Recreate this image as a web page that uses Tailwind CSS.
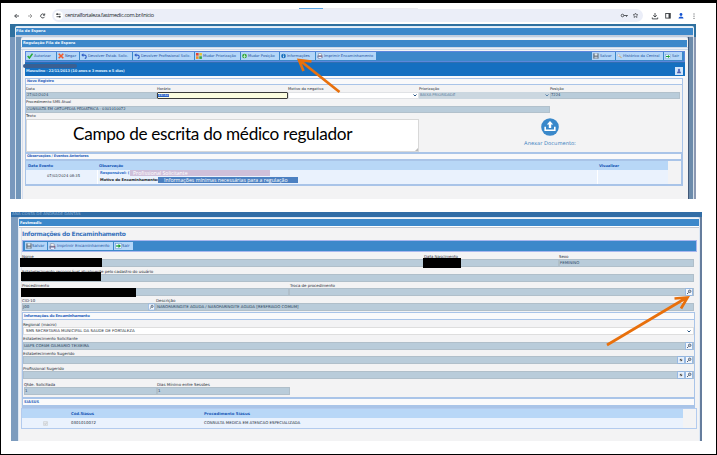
<!DOCTYPE html>
<html lang="pt-BR">
<head>
<meta charset="utf-8">
<title>Central Fortaleza</title>
<script src="https://cdn.jsdelivr.net/npm/@tailwindcss/browser@4"></script>
</head>
<body class="bg-black overflow-hidden">
<svg class="hidden">
  <symbol id="mag" viewBox="0 0 8 8"><rect x=".4" y=".4" width="7.2" height="7.2" rx="1" fill="#f4f7fc" stroke="#7aa7e0" stroke-width=".8"/><circle cx="4.700" cy="3.300" r="1.300" fill="#b9c6d8" stroke="#3c4c60" stroke-width=".7"/><path d="M3.600 4.500L2 6" stroke="#3c4c60" stroke-width=".9"/></symbol>
  <symbol id="clr" viewBox="0 0 8 8"><rect x=".4" y=".4" width="7.2" height="7.2" rx="1" fill="#e6effa" stroke="#7aa7e0" stroke-width=".8"/><circle cx="4" cy="4" r="1.300" fill="#555"/><path d="M3 5l2-2" stroke="#ddd" stroke-width=".5"/></symbol>
  <symbol id="disk" viewBox="0 0 8 8"><path d="M.5.5h6.8v7H.5z" fill="#55606d"/><path d="M2 .5h4v3H2z" fill="#dfe8f2"/><path d="M1.8 4.7h4.4v2.8H1.8z" fill="#b7c3d0"/></symbol>
  <symbol id="print" viewBox="0 0 8 8"><path d="M2 .5l4 .6v3H2z" fill="#fff" stroke="#667" stroke-width=".5"/><path d="M.5 3.2l6.8-.2v3.6l-5 .9L.5 6z" fill="#777b9d"/><path d="M2 5.2h4v1.7H2z" fill="#eef"/><circle cx="6.4" cy="4" r=".5" fill="#d33"/></symbol>
  <symbol id="undo" viewBox="0 0 8 8"><path d="M2 2.8h2.7c3 0 3 4 .3 4.6" fill="none" stroke="#315fc4" stroke-width="1.500"/><path d="M.3 2.8L3.2.3v5z" fill="#315fc4"/></symbol>
  <symbol id="exit" viewBox="0 0 8 7"><rect x=".4" y=".4" width="7.2" height="6.2" fill="#eef8ff" stroke="#6c9bd8" stroke-width=".7"/><path d="M1.2 3.5h4" stroke="#189a32" stroke-width="1.5"/><path d="M4 1.3l3 2.2-3 2.2z" fill="#189a32"/></symbol>
</svg>
<main class="relative mt-[3px] ml-[1px] flex h-[451px] w-[715px] flex-col overflow-hidden bg-white font-['DejaVu_Sans','Verdana',sans-serif] text-[3.7px] leading-none whitespace-nowrap text-[#1d2a35]">

  <!-- Browser chrome -->
  <header class="flex h-[21px] w-full flex-col pl-[9px]">
    <div class="flex h-[6px] items-end pl-[289px]"><i class="h-[1px] w-[24px] bg-[#5ba6e6]"></i><i class="h-[1px] w-[95px] bg-[#ececf1]"></i></div>
    <div class="flex h-[13px] items-center">
      <svg class="h-[10px] w-[42px]" viewBox="0 0 42 10" fill="none" stroke="#3c4043" stroke-width=".9"><path d="M9 5H4.700M6.700 3L4.700 5l2 2"/><path stroke="#999" d="M18 5h4M20 3l2 2-2 2"/><path d="M34.300 3.800a2 2 0 1 0 .2 2M34.700 2.500v1.700h-1.700"/></svg>
      <div class="flex h-[13px] w-[591px] items-center rounded-full bg-[#ebeef8] pl-[2px]">
        <svg class="h-[9px] w-[9px]" viewBox="0 0 9 9"><circle cx="4.500" cy="4.500" r="4.500" fill="#fff"/><path d="M2.500 3.200h4M2.500 5.700h4" stroke="#3c4043" stroke-width=".8"/><circle cx="3.200" cy="3.200" r=".9" fill="#3c4043"/><circle cx="5.700" cy="5.700" r=".9" fill="#3c4043"/></svg>
        <span class="ml-[2px] w-[513px] font-['Open_Sans',sans-serif] text-[5.500px] tracking-[-0.33px] text-[#20262c]">centralfortaleza.fastmedic.com.br/inicio</span>
        <svg class="h-[9px] w-[60px]" viewBox="0 0 60 9" fill="none" stroke="#4a4d52" stroke-width=".9"><circle cx="44.500" cy="4.500" r="1.300"/><path d="M45.800 4.500h4M48.500 4.500v1.300"/><path d="M57.500 2l.7 1.600 1.700.1-1.300 1.100.4 1.700-1.500-.9-1.500.9.400-1.700-1.300-1.100 1.700-.1z" stroke-width=".7"/></svg>
      </div>
      <svg class="ml-[4px] h-[10px] w-[50px]" viewBox="0 0 50 10" fill="none" stroke="#3c4043" stroke-width=".9"><path d="M8 2v4M6.200 4.300L8 6l1.800-1.700M5.300 6.500v1.400h5.400V6.500"/><rect x="18.700" y="2.500" width="4.600" height="4.600"/><path d="M22.300 2.500v4.600" stroke-width="1.500"/><circle cx="34" cy="3.500" r="1.400" fill="#1554d1" stroke="none"/><path d="M31.500 7.500c0-2.800 5-2.800 5 0z" fill="#1554d1" stroke="none"/><path d="M47 2.500v1M47 4.700v1M47 6.900v1"/></svg>
    </div>
  </header>

  <!-- Regulation screen -->
  <section class="ml-[9px] flex h-[175px] w-[686px] flex-col bg-[#2f709f] pt-[2px]">
    <div class="ml-[5px] flex w-[679px] flex-col rounded-t-[2px] border-t border-t-[#dcebf8] bg-[#e9eff6] pt-[1px] pl-[1px] pr-[1px]">
      <h2 class="flex h-[7px] items-center bg-[#3c88ca] text-[3.7px] font-bold text-[#f2f8ff]">Fila de Espera</h2>
      <div class="h-[2px] bg-[#c4cedd]"></div>
    </div>
    <div class="flex min-h-0 flex-1 bg-[#7898bd]">
      <i class="ml-[5px] w-[1px] bg-[#d9e4ef]"></i><i class="w-[5px] bg-[#7195b9]"></i>
      <div class="flex w-[667px] flex-col rounded-t-[2px] border-t border-[#dfe9f6] bg-[#f3f3f4] pt-[2px]">
        <h2 class="mx-[1px] flex h-[7px] items-center bg-[#3c88ca] pl-[1px] text-[3.7px] font-bold text-[#f2f8ff]">Regulação Fila de Espera</h2>
        <div class="h-[3px] border-y border-[#ccd9e9] bg-[#eef1f5]"></div>
        <div class="ml-[1px] flex h-[150px] w-[663px] flex-col border-l border-[#d6dff0] pt-[1px] pl-[2px]">
          <div class="flex h-[11px] shrink-0 items-center border border-[#5c86dc] bg-[#3c88ca] pr-[1px] text-[3.700px] text-[#1c509c] [&>span]:flex [&>span]:h-[8px] [&>span]:items-center [&>span]:gap-[1px] [&>span]:bg-[#b4d6f8] [&>span]:pl-[1px] [&>span]:mr-[1px]">
            <span class="w-[30px]"><svg class="h-[6px] w-[6px]" viewBox="0 0 6 6"><path d="M.7 3l1.700 2L5.500.7" fill="none" stroke="#25a836" stroke-width="1.500"/></svg><b class="font-normal">Autorizar</b></span>
            <span class="w-[22px]"><svg class="h-[6px] w-[6px]" viewBox="0 0 6 6"><path d="M.7.7l4.600 4.600M5.300.7L.7 5.300" stroke="#f0592b" stroke-width="1.600"/></svg><b class="font-normal">Negar</b></span>
            <span class="w-[52px]"><svg class="h-[6px] w-[6px]"><use href="#undo"/></svg><b class="font-normal">Devolver Estab. Solic.</b></span>
            <span class="w-[61px]"><svg class="h-[6px] w-[6px]"><use href="#undo"/></svg><b class="font-normal">Devolver Profissional Solic.</b></span>
            <span class="w-[45px]"><svg class="h-[6px] w-[6px]" viewBox="0 0 6 6"><path fill="#e44332" d="M0 0h2.600v2.600H0z"/><path fill="#e9c535" d="M3.300 0h2.600v2.600H3.300z"/><path fill="#f08e25" d="M0 3.300h2.600v2.600H0z"/><path fill="#36a746" d="M3.300 3.300h2.600v2.600H3.300z"/></svg><b class="font-normal">Mudar Priorização</b></span>
            <span class="w-[38px]"><svg class="h-[6px] w-[5px]" viewBox="0 0 6 6"><circle cx="3" cy="3" r="2.800" fill="#35aa3e"/><path d="M3 1.300v3.300M1.700 3.300L3 4.700l1.300-1.400" stroke="#fff" fill="none" stroke-width=".8"/></svg><b class="font-normal">Mudar Posição</b></span>
            <span class="w-[35px]"><svg class="h-[6px] w-[5px]" viewBox="0 0 6 6"><circle cx="3" cy="3" r="2.800" fill="#1b70bd"/><path d="M3 1.200v1M3 2.700v2" stroke="#fff" stroke-width=".9"/></svg><b class="font-normal">Informações</b></span>
            <span class="w-[60px]"><svg class="h-[6px] w-[6px]"><use href="#print"/></svg><b class="font-normal">Imprimir Encaminhamento</b></span>
            <i class="flex-1"></i>
            <span class="w-[23px]"><svg class="h-[6px] w-[6px]"><use href="#disk"/></svg><b class="font-normal">Salvar</b></span>
            <span class="w-[47px]"><svg class="h-[6px] w-[5px]" viewBox="0 0 6 6"><circle cx="2" cy="2" r="1.400" fill="#eef" stroke="#aaa" stroke-width=".6"/><path d="M3 3l2.500 2.500" stroke="#d49a42"/></svg><b class="font-normal">Histórico da Central</b></span>
            <span class="w-[18px]"><svg class="h-[5px] w-[6px]"><use href="#exit"/></svg><b class="font-normal">Sair</b></span>
          </div>
          <div class="relative flex h-[14px] shrink-0 items-center justify-between border-t border-[#2f6fb0] bg-[#156fc0] pr-[2px] pl-[1px] text-[3.700px] font-bold tracking-[-0.2px] text-[#d3e8fc]">
            <p class="pt-[5px]">Masculino - 22/11/2013 (10 anos e 3 meses e 5 dias)</p>
            <i class="absolute top-[1px] -left-[2px] h-[4px] w-[54px] rounded-[2px] bg-[#3a5f92]"></i>
            <svg class="mt-[4px] h-[8px] w-[8px]" viewBox="0 0 8 8"><path fill="#d2e5fa" d="M0 0h8v8H0z"/><circle cx="4" cy="3" r="1.200" fill="#5b6ec0"/><path d="M2 6.300c0-3 4-3 4 0z" fill="#4b60b0"/></svg>
          </div>
          <div class="h-[2px] shrink-0 bg-[#f8f8fa]"></div>
          <fieldset class="flex h-[76px] w-[658px] shrink-0 flex-col border border-b-2 border-[#a9c4e8]">
            <h3 class="flex h-[6px] items-center border-b border-[#a9c4e8] bg-[#f9f9fa] pl-[1px] text-[3.6px] font-bold tracking-[-0.15px] text-[#2f67be]">Novo Registro</h3>
            <div class="grid h-[14px] shrink-0 grid-cols-[131px_131px_131px_131px_130px] [&>div]:flex [&>div]:flex-col [&_label]:h-[7px] [&_label]:pt-[3px]">
              <div><label>Data</label><p class="flex h-[7px] items-center border border-[#b2c1cc] bg-[#b9ccda] text-[#24435f]">27/02/2024</p></div>
              <div><label>Horário</label><p class="flex h-[7px] items-center rounded-[1px] border border-[#3c3c3c] bg-[#fcfde0]"><mark class="bg-[#2b62c8] text-[#eef5ff]">14:32</mark></p></div>
              <div><label>Motivo da negativa</label><p class="flex h-[7px] items-center justify-end border border-[#e0e2e5] bg-white pr-[1px]"><svg class="h-[3px] w-[4px]" viewBox="0 0 4 3" fill="none" stroke="#245280"><path d="M.5.5L2 2 3.500.5"/></svg></p></div>
              <div><label>Priorização</label><p class="flex h-[7px] items-center justify-between bg-[#cbd7e0] px-[1px] text-[#56789a]">BAIXA PRIORIDADE<svg class="h-[3px] w-[4px]" viewBox="0 0 4 3" fill="none" stroke="#5881a8"><path d="M.5.5L2 2 3.500.5"/></svg></p></div>
              <div><label>Posição</label><p class="flex h-[7px] items-center border border-[#b2c1cc] bg-[#b9ccda] text-[#24435f]">7224</p></div>
            </div>
            <label class="h-[7px] shrink-0 pt-[2px]">Procedimento SMS Atual</label>
            <p class="flex h-[7px] w-[524px] shrink-0 items-center border border-[#b2c1cc] bg-[#b9ccda] text-[#1d3b56]">CONSULTA EM ORTOPEDIA PEDIATRICA - 0301010072</p>
            <div class="flex h-[39px]">
              <div class="w-[393px]">
                <label class="block h-[6px] pt-[2px]">Texto</label>
                <div class="relative flex h-[33px] items-center border border-[#d8d8d8] bg-white pl-[46px] font-['Lato','Carlito',sans-serif] text-[17.2px] tracking-[-0.3px] text-black"><span class="-mt-[4px]">Campo de escrita do médico regulador</span><svg class="absolute right-0 bottom-0 h-[3px] w-[3px]" viewBox="0 0 3 3"><path fill="#bbb" d="M3 0v3H0z"/></svg></div>
              </div>
              <div class="ml-[91px] flex w-[80px] flex-col items-center pt-[5px] text-[5.200px] text-[#4585c2]">
                <svg class="h-[18px] w-[18px]" viewBox="0 0 18 18"><circle cx="9" cy="9" r="8.800" fill="#3988ca"/><path d="M9 3L5.800 6.500h2V10h2.400V6.500h2z" fill="#fff"/><path d="M4.200 8.700v3.500h9.600V8.700" fill="none" stroke="#fff" stroke-width="1.600"/></svg>
                <span class="mt-[5px]">Anexar Documento:</span>
              </div>
            </div>
          </fieldset>
          <div class="flex w-[658px] shrink-0 flex-col border-r-2 border-b-2 border-l border-[#a9c4e8]">
            <h3 class="flex h-[5px] items-center bg-[#f9f9fa] pl-[1px] text-[3.6px] font-bold tracking-[-0.22px] text-[#2f67be]">Observações / Eventos Anteriores</h3>
            <div class="h-[2px] border-y border-[#a9c4e8]"></div>
            <div class="grid h-[9px] w-[642px] grid-cols-[71px_500px_71px] items-center bg-[#b8d7f7] text-[3.8px] font-bold tracking-[-0.1px] text-[#1d5cb8] [&>b]:pl-[2px]"><b>Data Evento</b><b>Observação</b><b class="pl-0">Visualizar</b></div>
            <div class="grid h-[14px] w-[642px] grid-cols-[71px_500px_71px] bg-[#eaf2fd] text-[3.7px]">
              <p class="flex items-center justify-center pl-[4px]">07/02/2024 08:35</p>
              <div class="flex flex-col border-l border-white pl-[2px] font-bold">
                <div class="flex h-[7px] items-center text-[#2f6fc8]"><span class="w-[30px] tracking-[-0.1px]">Responsável: (</span><span class="flex h-[6px] w-[140px] items-center bg-[#cfc0da] pl-[3px] font-['Open_Sans',sans-serif] text-[5.200px] font-normal text-white">Profissional Solicitante</span></div>
                <div class="flex h-[7px] items-center text-[#151a24]"><span class="w-[58px] tracking-[-0.03px]">Motivo do Encaminhamento:</span><span class="flex h-[6px] w-[140px] items-center bg-[#4b80c1] pl-[6px] font-['Open_Sans',sans-serif] text-[5.200px] font-normal text-white">Informações mínimas necessárias para a regulação</span></div>
              </div>
              <i class="border-l border-white"></i>
            </div>
          </div>
        </div>
      </div>
      <i class="w-[1px] bg-[#415878]"></i><i class="w-[4px] bg-[#6c8bab]"></i><i class="w-[1px] bg-[#d9e2eb]"></i><i class="flex-1 bg-[#8b98b2]"></i>
    </div>
  </section>

  <!-- Referral information screen -->
  <section class="mt-[13px] ml-[10px] flex h-[229px] w-[691px] flex-col bg-[#7d9cbe] text-[3.930px]">
    <div class="h-[5px] shrink-0 bg-[#316da6] pl-[1px] text-[4px] text-[#8fb4d8]">ANA COSTA DE ANDRADE DANTAS</div>
    <div class="flex min-h-0 flex-1 bg-[#7d9cbe]">
      <div class="ml-[7px] flex w-[682px] flex-col rounded-t-[2px] border-x border-t border-[#dce7f4] bg-[#f3f3f4] pt-[1px]">
        <h2 class="flex h-[7px] shrink-0 items-center bg-[#3c88ca] pl-[1px] text-[3.8px] font-bold text-[#f2f8ff]">Fastmedic</h2>
        <div class="h-[2px] shrink-0 border-b border-[#c2c7d0] bg-white"></div>
        <div class="ml-[2px] flex w-[676px] flex-col border-l border-[#dde4ee]">
          <h1 class="flex h-[12px] items-center text-[6px] font-bold tracking-[-0.32px] text-[#3a73bd]">Informações do Encaminhamento</h1>
          <div class="flex h-[12px] items-center border border-[#a9b7ee] bg-[#3c88ca] pl-[2px] text-[#1c509c] [&>span]:mr-[1px] [&>span]:flex [&>span]:h-[8px] [&>span]:items-center [&>span]:bg-[#b4d6f8] [&>span]:pl-[1px]">
            <span class="w-[22px]"><svg class="h-[6px] w-[6px]"><use href="#disk"/></svg>Salvar</span><span class="w-[65px]"><svg class="mr-[1px] h-[7px] w-[7px]"><use href="#print"/></svg>Imprimir Encaminhamento</span><span class="w-[19px]"><svg class="h-[6px] w-[7px]"><use href="#exit"/></svg>Sair</span>
          </div>
          <div class="grid h-[15px] w-[672px] grid-cols-[402px_135px_135px] [&_label]:block [&_label]:h-[7px] [&_label]:pt-[3px] [&_p]:flex [&_p]:h-[8px] [&_p]:items-center [&_p]:border [&_p]:border-[#b0bfca] [&_p]:bg-[#b9ccda] [&_p]:text-[#24435f]">
            <div><label>Nome</label><p></p></div><div><label>Data Nascimento</label><p></p></div><div><label>Sexo</label><p>FEMININO</p></div>
          </div>
          <label class="h-[7px] pt-[3px]">Estabelecimento responsável atualmente pelo cadastro do usuário</label>
          <p class="h-[8px] w-[672px] border border-[#b0bfca] bg-[#b9ccda]"></p>
          <div class="grid h-[14px] w-[672px] grid-cols-[267px_405px] [&_label]:block [&_label]:h-[6px] [&_label]:pt-[2px]">
            <div><label>Procedimento</label><p class="h-[8px] border border-[#b0bfca] bg-[#b9ccda]"></p></div>
            <div><label class="pl-[1px]">Troca de procedimento</label><p class="flex h-[8px] items-center justify-end border border-[#b0bfca] bg-[#b9ccda]"><svg class="h-[8px] w-[8px]"><use href="#mag"/></svg></p></div>
          </div>
          <div class="grid h-[15px] w-[672px] grid-cols-[134px_538px] [&_label]:block [&_label]:h-[7px] [&_label]:pt-[3px]">
            <div><label>CID-10</label><p class="flex h-[8px] items-center justify-between border border-[#b0bfca] bg-[#b9ccda] text-[#1d3b56]">J00<svg class="h-[8px] w-[7px]"><use href="#mag"/></svg></p></div>
            <div><label>Descrição</label><p class="flex h-[8px] items-center border border-[#b0bfca] bg-[#b9ccda] text-[#1d3b56]">NASOFARINGITE AGUDA / NASOFARINGITE AGUDA [RESFRIADO COMUM]</p></div>
          </div>
          <div class="h-[1px]"></div>
          <fieldset class="flex h-[87px] w-[673px] flex-col border border-b-2 border-[#a9c4e8]">
            <h3 class="flex h-[7px] shrink-0 items-center border-b border-[#a9c4e8] bg-[#fafafb] pl-[1px] text-[3.8px] font-bold tracking-[-0.2px] text-[#2f67be]">Informações do Encaminhamento</h3>
            <label class="h-[7px] shrink-0 pt-[3px]">Regional (macro)</label>
            <p class="flex h-[8px] shrink-0 items-center justify-between border border-[#dedede] bg-white px-[2px]">SMS SECRETARIA MUNICIPAL DA SAUDE DE FORTALEZA<svg class="h-[3px] w-[4px]" viewBox="0 0 4 3" fill="none" stroke="#245280"><path d="M.5.5L2 2 3.500.5"/></svg></p>
            <label class="h-[7px] shrink-0 pt-[2px]">Estabelecimento Solicitante</label>
            <p class="flex h-[8px] shrink-0 items-center justify-between border border-[#b0bfca] bg-[#b9ccda] text-[#1d3b56]">UAPS COFAM GILMARIO TEIXEIRA<svg class="h-[8px] w-[8px]"><use href="#mag"/></svg></p>
            <label class="h-[6px] shrink-0 pt-[2px]">Estabelecimento Sugerido</label>
            <p class="flex h-[8px] shrink-0 items-center justify-end border border-[#b0bfca] bg-[#b9ccda]"><svg class="h-[8px] w-[8px]"><use href="#clr"/></svg><svg class="h-[8px] w-[8px]"><use href="#mag"/></svg></p>
            <label class="h-[7px] shrink-0 pt-[3px]">Profissional Sugerido</label>
            <p class="flex h-[8px] shrink-0 items-center justify-end border border-[#b0bfca] bg-[#b9ccda]"><svg class="h-[8px] w-[8px]"><use href="#clr"/></svg><svg class="h-[8px] w-[8px]"><use href="#mag"/></svg></p>
            <div class="ml-[1px] grid grid-cols-[133px_133px] [&_label]:block [&_label]:h-[8px] [&_label]:pt-[4px]">
              <div><label>Qtde. Solicitada</label><p class="flex h-[8px] items-center border border-[#b0bfca] bg-[#b9ccda] text-[#1d3b56]">1</p></div>
              <div><label>Dias Mínimo entre Sessões</label><p class="flex h-[8px] items-center border border-[#b0bfca] bg-[#b9ccda] text-[#1d3b56]">1</p></div>
            </div>
          </fieldset>
          <h3 class="flex h-[6px] w-[673px] items-center border-x border-[#a9c4e8] bg-[#fafafb] pt-[1px] pl-[1px] text-[3.7px] font-bold text-[#2f67be]">SIASUS</h3>
          <div class="h-[3px] w-[673px] bg-[#a9c4e8]"></div>
          <div class="-ml-[1px] h-[21px] w-[676px] border border-[#b3cbee]">
            <div class="grid h-[9px] w-[661px] grid-cols-[47px_133px_481px] items-center bg-[#b8d7f7] text-[3.900px] font-bold text-[#1d5cb8] [&>b]:pl-[2px]"><i></i><b class="tracking-[-0.1px]">Cód.Siasus</b><b>Procedimento Siasus</b></div>
            <div class="grid h-[10px] w-[661px] grid-cols-[47px_133px_481px] items-center bg-[#eaf2fd] [&>span]:pl-[2px]"><svg class="ml-[21px] h-[5px] w-[5px]" viewBox="0 0 5 5"><rect x=".4" y=".4" width="4.200" height="4.200" rx=".6" fill="#e4e7eb" stroke="#cfd2d6" stroke-width=".7"/><path d="M1.300 2.500l1 1 1.500-2" fill="none" stroke="#b4b9c0" stroke-width=".7"/></svg><span>0301010072</span><span>CONSULTA MEDICA EM ATENCAO ESPECIALIZADA</span></div>
          </div>
        </div>
      </div>
      <i class="w-[2px] bg-[#657d9d]"></i>
    </div>
  </section>

  <!-- Redactions and callout arrows laid over the screens -->
  <i class="absolute top-[255px] left-[19px] h-[9px] w-[82px] bg-black"></i>
  <i class="absolute top-[269px] left-[20px] h-[9px] w-[80px] bg-black"></i>
  <i class="absolute top-[285px] left-[20px] h-[9px] w-[115px] bg-black"></i>
  <i class="absolute top-[255px] left-[422px] h-[10px] w-[38px] bg-black"></i>
  <svg class="absolute -top-[3px] -left-[1px] h-[455px] w-[717px]" viewBox="0 0 717 455" fill="none" stroke="#e8700c" stroke-width="2.700"><path d="M339.500 92L300 60.500M303.500 71L299 60l12.500 1.500"/><path d="M607 345l79-47M674.500 298.500l13-1-6.500 11"/></svg>
</main>
</body>
</html>
